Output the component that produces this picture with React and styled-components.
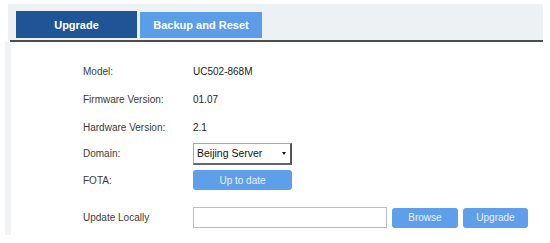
import React from 'react';
import styled, { createGlobalStyle } from 'styled-components';

const GlobalStyle = createGlobalStyle`
  body {
    margin: 0;
    background: #ffffff;
    font-family: "Liberation Sans Narrow", "Arial Narrow", "Liberation Sans", Arial, sans-serif;
  }
`;

const StyledPage = styled.div`
  width: 550px;
  height: 243px;
  padding-top: 4px;
  box-sizing: border-box;
  overflow: hidden;
`;

const StyledTabBar = styled.div`
  display: flex;
  align-items: flex-end;
  gap: 3px;
  height: 36px;
  margin-left: 8px;
  width: 535px;
  padding-left: 8px;
  box-sizing: border-box;
  background: #eef1f3;
`;

const StyledTab = styled.div`
  display: flex;
  align-items: center;
  justify-content: center;
  width: ${({ $wide }) => ($wide ? '122px' : '121px')};
  height: ${({ $active }) => ($active ? '27px' : '26px')};
  margin-bottom: 2px;
  background: ${({ $active }) => ($active ? '#1f5496' : '#5c9de8')};
  color: #ffffff;
  font-family: "Liberation Sans", Arial, sans-serif;
  font-weight: bold;
  font-size: 11px;
`;

const StyledRule = styled.div`
  margin-left: 10px;
  width: 533px;
  height: 2px;
  background: #4b4d50;
`;

const StyledPanel = styled.div`
  display: flex;
  flex-direction: column;
  margin-left: 5px;
  height: 193px;
  padding: 15px 0 0 72px;
  box-sizing: border-box;
  border-left: 6px solid #f1f3f5;
`;

const StyledRow = styled.div`
  display: grid;
  grid-template-columns: 110px auto;
  align-items: center;
  height: ${({ $h }) => $h}px;
  margin-top: ${({ $top }) => $top || 0}px;
`;

const StyledLabel = styled.div`
  font-size: 10px;
  color: #3a3a3a;
`;

const StyledValue = styled.div`
  font-size: 10px;
  color: #222222;
`;

const StyledSelect = styled.div`
  position: relative;
  display: flex;
  align-items: center;
  width: 99px;
  height: 22px;
  padding-left: 3px;
  box-sizing: border-box;
  border: 1px solid #a8a8a8;
  border-right: 2px solid #555;
  border-bottom: 2px solid #666;
  background: #fff;
  font-size: 10.5px;
  color: #111;
`;

const StyledArrow = styled.span`
  position: absolute;
  right: 4px;
  top: 8px;
  width: 0;
  height: 0;
  border-left: 2.5px solid transparent;
  border-right: 2.5px solid transparent;
  border-top: 3px solid #111;
`;

const StyledButton = styled.div`
  display: flex;
  align-items: center;
  justify-content: center;
  width: ${({ $w }) => $w}px;
  height: 20px;
  border-radius: 3px;
  background: #5f9ee8;
  color: #eaf2fc;
  font-size: 10px;
`;

const StyledUploadLine = styled.div`
  display: flex;
  gap: 5px;
  align-items: center;
`;

const StyledInput = styled.div`
  width: 194px;
  height: 21px;
  box-sizing: border-box;
  border: 1px solid #bdbdbd;
  background: #fff;
`;

const infoRows = [
  { label: 'Model:', value: 'UC502-868M' },
  { label: 'Firmware Version:', value: '01.07' },
  { label: 'Hardware Version:', value: '2.1' },
];

const App = () => (
  <>
    <GlobalStyle />
    <StyledPage>
      <StyledTabBar>
        <StyledTab $active>Upgrade</StyledTab>
        <StyledTab $wide>Backup and Reset</StyledTab>
      </StyledTabBar>
      <StyledRule />
      <StyledPanel>
        {infoRows.map((row) => (
          <StyledRow key={row.label} $h={28}>
            <StyledLabel>{row.label}</StyledLabel>
            <StyledValue>{row.value}</StyledValue>
          </StyledRow>
        ))}
        <StyledRow $h={25}>
          <StyledLabel>Domain:</StyledLabel>
          <StyledSelect>
            Beijing Server
            <StyledArrow />
          </StyledSelect>
        </StyledRow>
        <StyledRow $h={28}>
          <StyledLabel>FOTA:</StyledLabel>
          <StyledButton $w={99}>Up to date</StyledButton>
        </StyledRow>
        <StyledRow $h={21} $top={13}>
          <StyledLabel>Update Locally</StyledLabel>
          <StyledUploadLine>
            <StyledInput />
            <StyledButton $w={66}>Browse</StyledButton>
            <StyledButton $w={65}>Upgrade</StyledButton>
          </StyledUploadLine>
        </StyledRow>
      </StyledPanel>
    </StyledPage>
  </>
);

export default App;
